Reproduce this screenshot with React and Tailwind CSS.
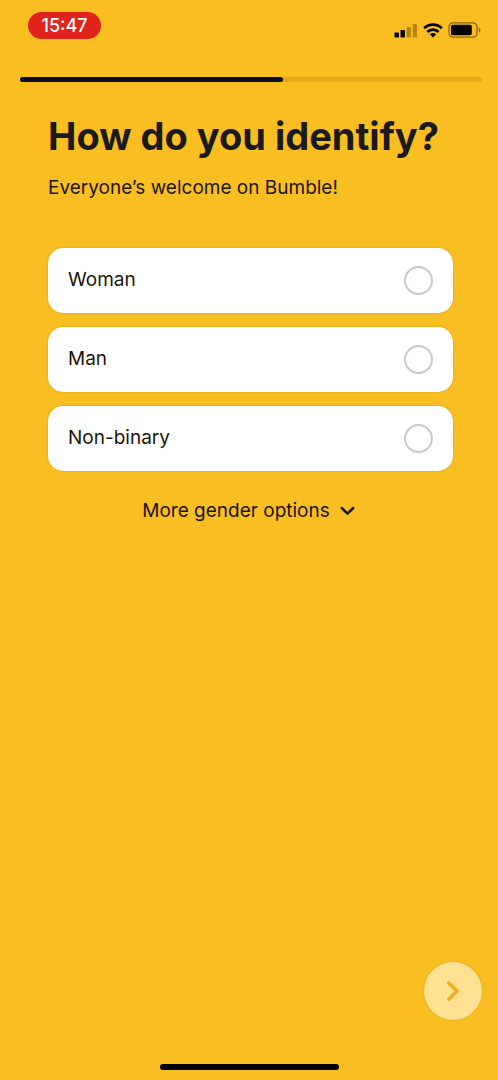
import { useState } from "react";

const OPTIONS = ["Woman", "Man", "Non-binary"];

function StatusBar() {
  return (
    <header className="flex items-start justify-between pt-3 pr-[17px] pl-7">
      <time className="flex h-[27px] w-[73px] items-center justify-center rounded-full bg-[#e0231c] text-[18px] leading-none font-medium text-white">
        15:47
      </time>
      <div className="flex items-center gap-[5px] pt-[10px]">
        <svg width="24" height="15" viewBox="0 0 24 15" role="img" aria-label="Signal">
          <rect x="0.5" y="9.5" width="4.5" height="5" rx="0.8" />
          <rect x="6.5" y="7" width="4.5" height="7.5" rx="0.8" />
          <rect x="12.7" y="4" width="4.2" height="10.5" rx="0.8" fill="#b78508" />
          <rect x="18.7" y="1" width="4.2" height="13.5" rx="0.8" fill="#b78508" />
        </svg>
        <svg width="20" height="15" viewBox="0 0 20 15" role="img" aria-label="Wi-Fi">
          <g fill="none" stroke="#000" strokeWidth="2.7">
            <path d="M1.2 5.2C6.1 0.5 13.9 0.5 18.8 5.2" />
            <path d="M4.4 8.9C7.6 5.9 12.4 5.9 15.6 8.9" />
          </g>
          <path d="M6.8 11.2C8.6 9.5 11.4 9.5 13.2 11.2L10 14.4Z" />
        </svg>
        <svg width="33" height="16" viewBox="0 0 33 16" role="img" aria-label="Battery">
          <rect x="1" y="0.8" width="28" height="14.4" rx="4.2" fill="none" stroke="#8d6607" strokeWidth="1.3" />
          <rect x="3" y="2.8" width="20.8" height="10.4" rx="1.8" />
          <path d="M30.8 5.5C33 6.2 33 9.8 30.8 10.5Z" fill="#8d6607" />
        </svg>
      </div>
    </header>
  );
}

function Option({ label, checked, onSelect }) {
  return (
    <label className="flex h-[65px] cursor-pointer items-center justify-between rounded-[15px] bg-white px-5 text-[19px] shadow-[0_0_2px_rgba(150,105,0,0.45)]">
      {label}
      <input
        type="radio"
        name="gender"
        value={label}
        checked={checked}
        onChange={onSelect}
        className="size-[29px] appearance-none rounded-full border-2 border-[#cbc9cc] bg-white checked:border-[9px] checked:border-[#1c1a19]"
      />
    </label>
  );
}

export default function App() {
  const [selected, setSelected] = useState(null);

  return (
    <div className="flex min-h-screen flex-col bg-[#f9be22] font-['Inter','Liberation_Sans',sans-serif] text-[#1c1408]">
      <StatusBar />
      <div className="mt-[38px] mr-4 ml-5">
        <div
          role="progressbar"
          aria-label="Sign-up progress"
          aria-valuenow={57}
          aria-valuemin={0}
          aria-valuemax={100}
          className="h-[5px] rounded-full bg-[#e5aa16]"
        >
          <div className="h-full w-[57%] rounded-full bg-[#0b0b12]" />
        </div>
      </div>
      <main className="flex grow flex-col pr-[45px] pl-12">
        <h1 id="question" className="mt-8 text-[38px] leading-[44px] font-bold whitespace-nowrap text-[#1b1a1a]">
          How do you identify?
        </h1>
        <p className="mt-[18px] text-[19px] leading-6">Everyone’s welcome on Bumble!</p>
        <div role="radiogroup" aria-labelledby="question" className="mt-12 flex flex-col gap-[14px]">
          {OPTIONS.map((label) => (
            <Option key={label} label={label} checked={selected === label} onSelect={() => setSelected(label)} />
          ))}
        </div>
        <button type="button" className="mt-[26px] flex cursor-pointer items-center gap-[10px] self-center pr-1 text-[19px] leading-7">
          More gender options
          <svg width="15" height="10" viewBox="0 0 15 10" fill="none" stroke="currentColor" strokeWidth="2.5" strokeLinecap="round" strokeLinejoin="round" aria-hidden="true">
            <path d="M1.8 2L7.5 7.7L13.2 2" />
          </svg>
        </button>
      </main>
      <footer className="flex flex-col items-center">
        <button
          type="button"
          aria-label="Continue"
          className="mr-4 flex size-[58px] cursor-pointer items-center justify-center self-end rounded-full bg-[#ffe193] shadow-[0_0_2px_rgba(190,140,0,0.5)]"
        >
          <svg width="14" height="22" viewBox="0 0 14 22" fill="none" stroke="#edaf1c" strokeWidth="3.4" strokeLinecap="round" strokeLinejoin="round" aria-hidden="true">
            <path d="M2.6 2.8L11.2 11L2.6 19.2" />
          </svg>
        </button>
        <div className="mt-11 mb-[10px] h-[6px] w-[179px] rounded-full bg-black" />
      </footer>
    </div>
  );
}
